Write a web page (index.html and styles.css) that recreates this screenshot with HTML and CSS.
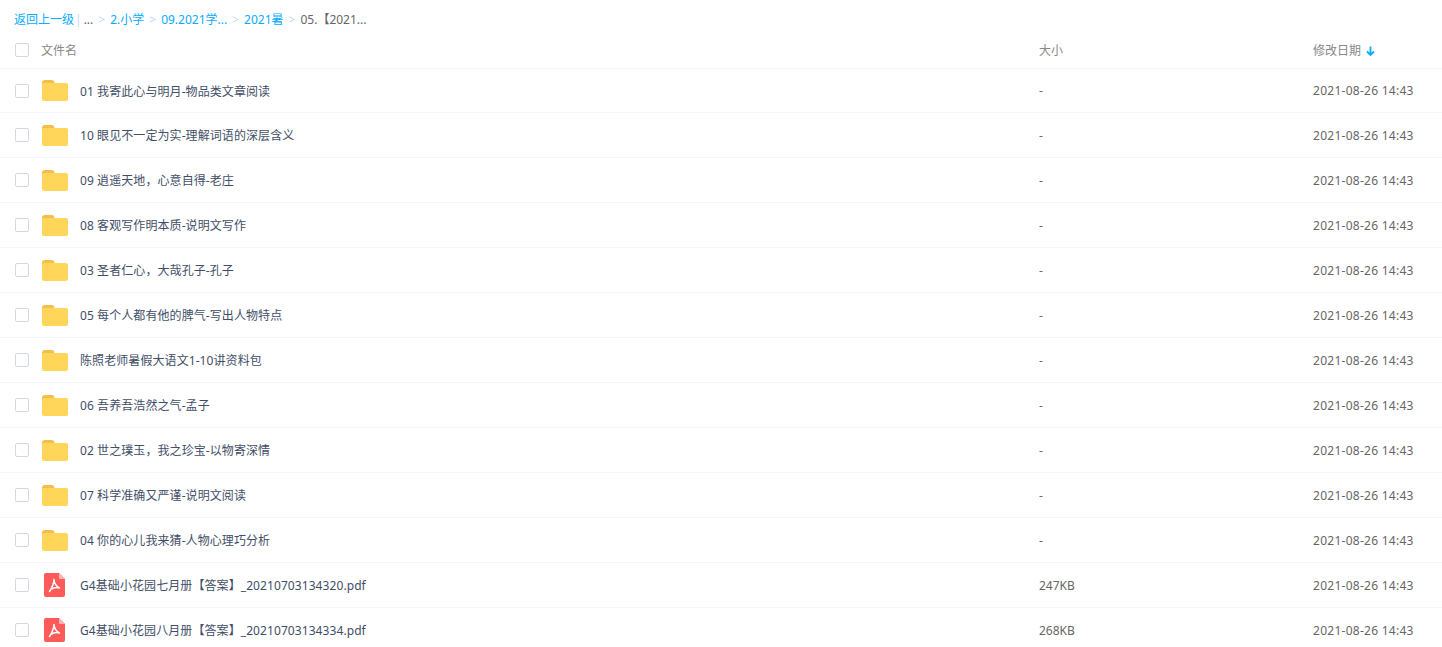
FILE: index.html
```html
<!DOCTYPE html>
<html lang="zh-CN">
<head>
    <meta charset="UTF-8">
    <title>文件列表</title>
    <link rel="stylesheet" href="styles.css">
</head>
<body>

    <!-- Icons, reused by every row -->
    <svg class="defs" width="0" height="0">
        <symbol id="folder" viewBox="0 0 26 21">
            <path d="M0 3 Q0 0 3 0 H10 Q12 0 12.5 3 V8 H0Z" fill="#f2bf4c"/>
            <rect y="3" width="26" height="18" rx="2" fill="#ffd659"/>
        </symbol>
        <symbol id="pdf" viewBox="0 0 21 24">
            <path d="M2 0 H15 L21 6 V22 Q21 24 19 24 H2 Q0 24 0 22 V2 Q0 0 2 0Z" fill="#ff5a5a"/>
            <path d="M15 0 L21 6 H16 Q15 6 15 5Z" fill="#ffb3b3"/>
            <path d="M10 6.5 Q9.8 12 5.5 18.5 M10 6.5 Q10.5 12.5 15.5 15 Q11.5 13.5 6.5 16.5" fill="none" stroke="#fff" stroke-width="1.5" stroke-linecap="round" stroke-linejoin="round"/>
        </symbol>
    </svg>

    <!-- Breadcrumb -->
    <div class="crumbs">
        <a href="#">返回上一级</a>
        <span class="pipe">|</span>
        <span>...</span>
        <span class="sep">&gt;</span>
        <a href="#">2.小学</a>
        <span class="sep">&gt;</span>
        <a href="#">09.2021学...</a>
        <span class="sep">&gt;</span>
        <a href="#">2021暑</a>
        <span class="sep">&gt;</span>
        <span>05.<span class="br">【</span>2021...</span>
    </div>

    <!-- Header row -->
    <div class="row head">
        <span class="check"></span>
        <span class="col-name">文件名</span>
        <span class="col-size">大小</span>
        <span class="col-date">修改日期
            <svg class="sort" width="9" height="10" viewBox="0 0 9 10"><path d="M4.5 0.5 V8.5 M1 5.5 L4.5 9 L8 5.5" fill="none" stroke="#09aaff" stroke-width="1.8"/></svg>
        </span>
    </div>

    <!-- Rows -->
    <div id="list"></div>

    <script src="list.js"></script>
</body>
</html>
```

FILE: styles.css
```css
/* Basic Styles */
html, body {
    margin: 0;
    padding: 0;
    height: 647px;
    overflow: hidden;
    background-color: #fff;
}

body {
    font-family: "Noto Sans", "Noto Sans CJK SC", sans-serif;
    font-size: 12px;
    color: #424e67;
}

.defs {
    display: block;
    height: 0;
}

.br {
    font-family: "Noto Sans CJK TC", sans-serif;
}

/* Breadcrumb */
.crumbs {
    height: 38px;
    padding-left: 14px;
    display: flex;
    align-items: center;
    gap: 4px;
    color: #666;
    box-sizing: border-box;
}

.crumbs a {
    color: #09aaff;
    text-decoration: none;
}

.crumbs .sep {
    color: #c4d8f4;
    margin: 0 1px;
}

.crumbs .pipe {
    color: #c4d8f4;
    margin: 0 -2px 0 -3px;
}

/* Rows */
.row {
    height: 45px;
    display: flex;
    align-items: center;
    box-sizing: border-box;
    border-bottom: 1px solid #f2f6fd;
    padding-left: 15px;
}

.row:first-child {
    height: 44px;
}

.row.head {
    height: 31px;
    padding-bottom: 7px;
    color: #888;
}

.check {
    width: 12px;
    height: 12px;
    border: 1px solid #d4d8e2;
    border-radius: 2px;
    flex: none;
}

.col-name {
    width: 998px;
    margin-left: 12px;
    flex: none;
}

.col-size {
    width: 274px;
    flex: none;
}

.col-date {
    flex: none;
    white-space: nowrap;
}

.file-name ~ .col-size,
.file-name ~ .col-date {
    color: #666;
}

.file-name ~ .col-date {
    letter-spacing: 0.27px;
}

.sort {
    margin-left: 2px;
    vertical-align: -1px;
}

.icon {
    flex: none;
    width: 26px;
    height: 21px;
    margin-left: 13px;
}

.icon.pdf {
    width: 21px;
    height: 24px;
    margin-left: 15px;
    margin-right: 3px;
}

.file-name {
    width: 959px;
    margin-left: 12px;
    flex: none;
    white-space: nowrap;
    letter-spacing: 0.08px;
}
```

FILE: list.js
```js
const files = [
    { name: "01 我寄此心与明月-物品类文章阅读", size: "-" },
    { name: "10 眼见不一定为实-理解词语的深层含义", size: "-" },
    { name: "09 逍遥天地，心意自得-老庄", size: "-" },
    { name: "08 客观写作明本质-说明文写作", size: "-" },
    { name: "03 圣者仁心，大哉孔子-孔子", size: "-" },
    { name: "05 每个人都有他的脾气-写出人物特点", size: "-" },
    { name: "陈照老师暑假大语文1-10讲资料包", size: "-" },
    { name: "06 吾养吾浩然之气-孟子", size: "-" },
    { name: "02 世之璞玉，我之珍宝-以物寄深情", size: "-" },
    { name: "07 科学准确又严谨-说明文阅读", size: "-" },
    { name: "04 你的心儿我来猜-人物心理巧分析", size: "-" },
    { name: "G4基础小花园七月册<span class=\"br\">【</span>答案<span class=\"br\">】</span>_20210703134320.pdf", size: "247KB", pdf: true },
    { name: "G4基础小花园八月册<span class=\"br\">【</span>答案<span class=\"br\">】</span>_20210703134334.pdf", size: "268KB", pdf: true }
];

const list = document.getElementById('list');

files.forEach((file) => {
    const row = document.createElement('div');
    row.className = 'row';
    const icon = file.pdf
        ? '<svg class="icon pdf"><use href="#pdf"/></svg>'
        : '<svg class="icon"><use href="#folder"/></svg>';
    row.innerHTML = `<span class="check"></span>${icon}` +
        `<span class="file-name">${file.name}</span>` +
        `<span class="col-size">${file.size}</span>` +
        `<span class="col-date">2021-08-26 14:43</span>`;
    list.appendChild(row);
});
```
